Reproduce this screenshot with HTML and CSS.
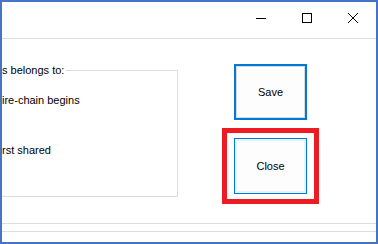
FILE: index.html
```html
<!DOCTYPE html>
<html lang="en">
<head>
    <meta charset="UTF-8">
    <meta name="viewport" content="width=device-width, initial-scale=1.0">
    <title>Options</title>
    <link rel="stylesheet" href="styles.css">
</head>
<body>
    <div class="window">
        <div class="title-bar">
            <button type="button" class="caption-btn" aria-label="Minimize">
                <svg width="10" height="10" viewBox="0 0 10 10"><path d="M0 5.5h10" stroke="#000" stroke-width="1"/></svg>
            </button>
            <button type="button" class="caption-btn" aria-label="Maximize">
                <svg width="10" height="10" viewBox="0 0 10 10"><rect x="0.5" y="0.5" width="9" height="9" fill="none" stroke="#000" stroke-width="1"/></svg>
            </button>
            <button type="button" class="caption-btn" aria-label="Close">
                <svg width="10" height="10" viewBox="0 0 10 10"><path d="M0 0L10 10M10 0L0 10" stroke="#000" stroke-width="1"/></svg>
            </button>
        </div>

        <div class="main">
            <fieldset class="group">
                <legend>s belongs to:</legend>
                <div class="option first">ire-chain begins</div>
                <div class="option">rst shared</div>
            </fieldset>

            <div class="actions">
                <button type="button" class="btn btn-default">Save</button>
                <div class="highlight">
                    <button type="button" class="btn btn-focus">Close</button>
                </div>
            </div>
        </div>

        <div class="strip"></div>
        <div class="footer"></div>
    </div>
</body>
</html>
```

FILE: styles.css
```css
html, body {
    margin: 0;
    padding: 0;
    background-color: #fff;
}

body {
    font-family: 'Liberation Sans', Arial, sans-serif;
    font-size: 11px;
    color: #000;
}

.window {
    box-sizing: border-box;
    width: 378px;
    height: 244px;
    border: 2px solid #4674c4;
    display: flex;
    flex-direction: column;
    overflow: hidden;
    background-color: #fff;
}

/* title bar */
.title-bar {
    height: 36px;
    border-bottom: 1px solid #dcdcdc;
    display: flex;
    justify-content: flex-end;
    flex-shrink: 0;
}

.caption-btn {
    width: 46px;
    height: 36px;
    padding: 11px 0 0;
    border: none;
    background: none;
    display: flex;
    justify-content: center;
    align-items: flex-start;
}

.caption-btn svg {
    display: block;
    shape-rendering: crispEdges;
}

.caption-btn:last-child svg {
    shape-rendering: auto;
}

/* content */
.main {
    box-sizing: border-box;
    height: 185px;
    padding-top: 25px;
    border-bottom: 1px solid #dcdcdc;
    display: flex;
    align-items: flex-start;
    flex-shrink: 0;
}

.group {
    box-sizing: border-box;
    width: 184px;
    height: 133px;
    margin: 0 0 0 -8px;
    padding: 0 8px;
    border: 1px solid #dcdcdc;
    min-width: 0;
}

.group legend {
    padding: 0 2px 0 0;
    margin-left: -1px;
    line-height: 13px;
}

.option {
    line-height: 13px;
    white-space: nowrap;
    margin-left: -1px;
}

.option.first {
    margin-top: 17px;
}

.option + .option {
    margin-top: 37px;
}

.actions {
    margin-left: 44px;
    display: flex;
    flex-direction: column;
    align-items: flex-start;
}

.btn {
    box-sizing: border-box;
    width: 73px;
    height: 56px;
    background-color: #fdfdfd;
    font-family: 'Liberation Sans', Arial, sans-serif;
    font-size: 11px;
    color: #000;
    padding: 0;
}

.btn-default {
    margin-left: 12px;
    border: 2px solid #0078d7;
    box-shadow: inset 0 0 0 1px #dadada;
}

.btn-focus {
    border: 1px solid #0078d7;
    box-shadow: inset 0 0 0 2px #e5f1fb;
}

.highlight {
    margin-top: 8px;
    border: 5px solid #ed1c24;
    padding: 5px 7px;
}

.highlight .btn {
    display: block;
}

.strip {
    height: 7px;
    border-bottom: 1px solid #dcdcdc;
    flex-shrink: 0;
}

.footer {
    flex: 1;
}
```
